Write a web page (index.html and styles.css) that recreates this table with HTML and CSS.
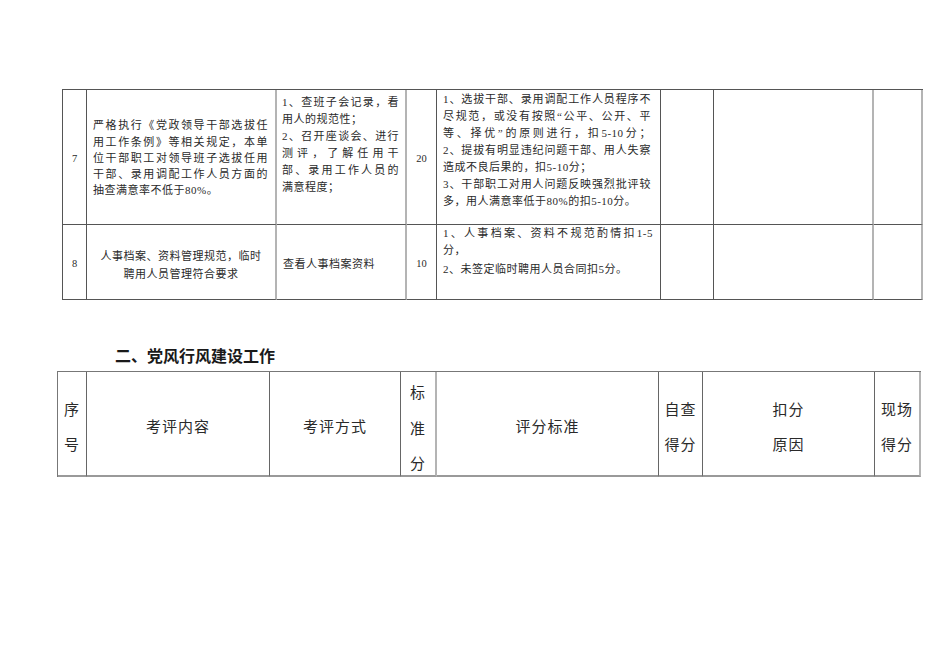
FILE: index.html
```html
<!DOCTYPE html>
<html lang="zh-CN">
<head>
<meta charset="utf-8">
<title>党风行风建设工作</title>
<link rel="stylesheet" href="styles.css">
</head>
<body>
<div class="t1">
  <div class="c num">7</div>
  <div class="c lr txt c2a">
    <div class="j">严格执行《党政领导干部选拔任</div>
    <div class="j">用工作条例》等相关规定，本单</div>
    <div class="j">位干部职工对领导班子选拔任用</div>
    <div class="j">干部、录用调配工作人员方面的</div>
    <div>抽查满意率不低于80%。</div>
  </div>
  <div class="c lr txt c3a">
    <div class="j">1、查班子会记录，看</div>
    <div>用人的规范性；</div>
    <div class="j">2、召开座谈会、进行</div>
    <div class="j">测评，了解任用干</div>
    <div class="j">部、录用工作人员的</div>
    <div>满意程度；</div>
  </div>
  <div class="c num">20</div>
  <div class="c txt c5a">
    <div class="j">1、选拔干部、录用调配工作人员程序不</div>
    <div class="j">尽规范，或没有按照“公平、公开、平</div>
    <div class="j">等、择优”的原则进行，扣5-10分；</div>
    <div class="j">2、提拔有明显违纪问题干部、用人失察</div>
    <div>造成不良后果的，扣5-10分；</div>
    <div class="j">3、干部职工对用人问题反映强烈批评较</div>
    <div>多，用人满意率低于80%的扣5-10分。</div>
  </div>
  <div class="c"></div>
  <div class="c lr"></div>
  <div class="c lr"></div>

  <div class="c num">8</div>
  <div class="c lr txt c2b">
    <div>人事档案、资料管理规范，临时</div>
    <div>聘用人员管理符合要求</div>
  </div>
  <div class="c lr txt c3b">查看人事档案资料</div>
  <div class="c num">10</div>
  <div class="c txt c5b">
    <div class="j">1、人事档案、资料不规范酌情扣1-5</div>
    <div>分，</div>
    <div class="gap">2、未签定临时聘用人员合同扣5分。</div>
  </div>
  <div class="c"></div>
  <div class="c lr"></div>
  <div class="c lr"></div>
</div>

<h2 class="title">二、党风行风建设工作</h2>

<div class="t2">
  <div class="h">序<br>号</div>
  <div class="h">考评内容</div>
  <div class="h">考评方式</div>
  <div class="h lr stack">标<br>准<br>分</div>
  <div class="h">评分标准</div>
  <div class="h">自查<br>得分</div>
  <div class="h">扣分<br>原因</div>
  <div class="h lr">现场<br>得分</div>
</div>
</body>
</html>
```

FILE: styles.css
```css
html, body {
  margin: 0;
  padding: 0;
  background: #ffffff;
}

body {
  width: 950px;
  height: 672px;
  overflow: hidden;
  color: #2a2a2a;
  font-family: "Liberation Serif", "Noto Sans CJK SC", serif;
}

.t1 {
  display: grid;
  grid-template-columns: 24px 190px 130px 30px 224px 53px 160px 49px;
  grid-template-rows: 135px 75px;
  width: max-content;
  margin: 89px 0 0 62px;
  border-top: 1px solid #555;
  border-left: 1px solid #555;
}

.c {
  box-sizing: border-box;
  border-right: 1px solid #555;
  border-bottom: 1px solid #555;
}

.lr {
  border-right: 2px solid #b4b4b4;
}

.num {
  display: flex;
  align-items: center;
  justify-content: center;
  font-size: 10.5px;
  padding-top: 2px;
}

.txt {
  font-size: 11px;
  letter-spacing: 0.5px;
  line-height: 17px;
  white-space: nowrap;
}

.j {
  text-align: justify;
  text-align-last: justify;
}

.c2a {
  display: flex;
  flex-direction: column;
  justify-content: center;
  padding: 2px 7px 0 6px;
  line-height: 16.2px;
}

.c3a {
  padding: 4px 6px 0 5px;
}

.c5a {
  padding: 1px 9px 0 6px;
}

.c2b {
  display: flex;
  flex-direction: column;
  justify-content: center;
  align-items: center;
  padding-top: 6px;
  line-height: 18px;
}

.c3b {
  display: flex;
  align-items: center;
  padding: 4px 0 0 6px;
}

.c5b {
  padding: 0 7px 0 6px;
}

.gap {
  margin-top: 2px;
}

.title {
  margin: 44px 0 5px 0;
  padding-left: 115px;
  font-family: "Noto Sans CJK SC", sans-serif;
  font-size: 16px;
  line-height: 22px;
  font-weight: 700;
  color: #1a1a1a;
}

.t2 {
  display: grid;
  grid-template-columns: 29px 183px 131px 36px 222px 44px 172px 46px;
  grid-template-rows: 105px;
  width: max-content;
  margin-left: 57px;
  border-top: 1px solid #777;
  border-left: 1px solid #777;
}

.h {
  box-sizing: border-box;
  border-right: 1px solid #666;
  border-bottom: 2px solid #999;
  display: flex;
  align-items: center;
  justify-content: center;
  text-align: center;
  padding-top: 4px;
  font-family: "Noto Sans CJK SC", sans-serif;
  font-size: 15px;
  letter-spacing: 1px;
  line-height: 35px;
  color: #2a2a2a;
}

.h.lr {
  border-right: 2px solid #b4b4b4;
}

.stack {
  display: block;
  padding-top: 2px;
  line-height: 35.5px;
}
```
